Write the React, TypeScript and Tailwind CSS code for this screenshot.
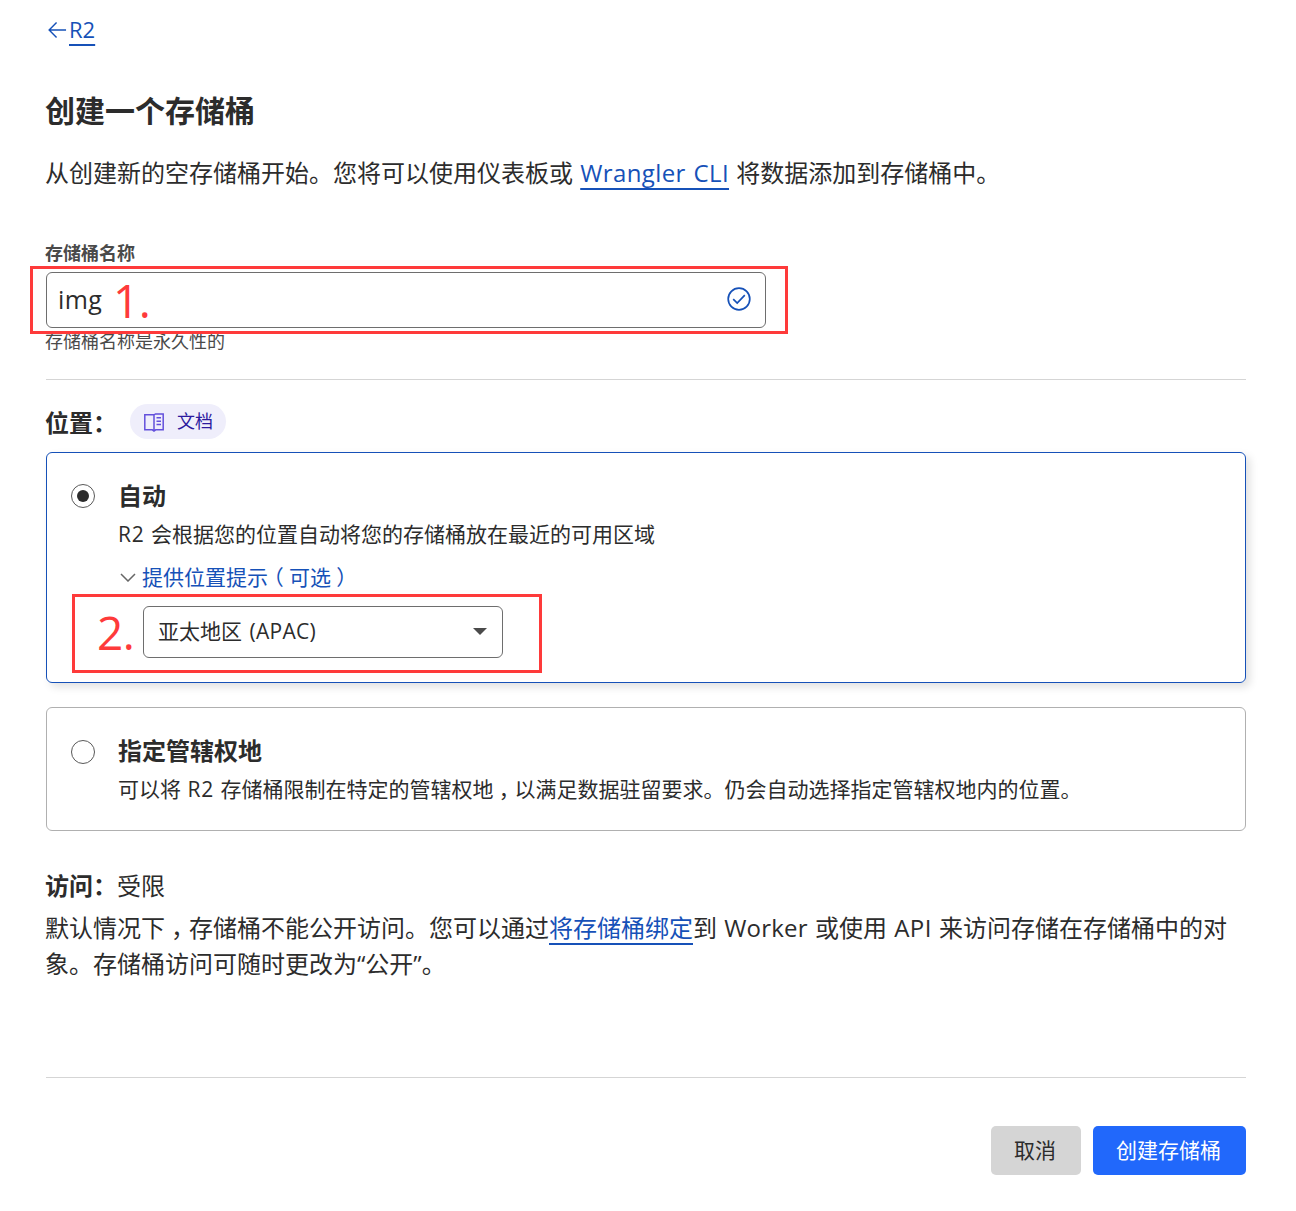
import React from "react";

function Mark({ children, className }: { children: React.ReactNode; className: string }) {
  return (
    <span className={`pointer-events-none absolute text-[46px] leading-[46px] tracking-[-0.5px] text-[#fe3a3a] ${className}`}>
      {children}
    </span>
  );
}

function Link({ children, className = "" }: { children: React.ReactNode; className?: string }) {
  return (
    <a
      href="#"
      className={`text-[#1651b8] underline decoration-2 underline-offset-[6px] ${className}`}
    >
      {children}
    </a>
  );
}

/* Full-width punctuation, centred in its one-em cell. */
function Punct({ children }: { children: React.ReactNode }) {
  return <span className="px-[0.25em] [font-feature-settings:'halt']">{children}</span>;
}

function Radio({ checked = false, className }: { checked?: boolean; className: string }) {
  return (
    <span
      role="radio"
      aria-checked={checked}
      className={`ml-6 flex size-6 shrink-0 items-center justify-center rounded-full border border-[#595959] bg-white ${className}`}
    >
      {checked && <span className="size-3 rounded-full bg-[#2c2c2c]" />}
    </span>
  );
}

export default function App() {
  return (
    <main className="h-[1211px] w-[1296px] overflow-hidden bg-white pr-[50px] pl-[46px] font-['Open_Sans','Noto_Sans_CJK_SC',sans-serif] text-[24px] text-[#2c2c2c]">
      <nav className="flex h-[58px] items-center text-[22px] leading-[30px]">
        <svg className="mt-px ml-[2px] mr-[2px] h-[18px] w-[19px] text-[#1651b8]" viewBox="0 0 20 18" fill="none" stroke="currentColor" strokeWidth="1.5">
          <path d="M19 9H1.5M9 1L1.2 9L9 17" />
        </svg>
        <Link>R2</Link>
      </nav>

      <h1 className="mt-[31px] -ml-px text-[30px] leading-[44px] font-bold">创建一个存储桶</h1>
      <p className="mt-[22px] -ml-px leading-[36px] whitespace-nowrap [word-spacing:1px]">
        从创建新的空存储桶开始。您将可以使用仪表板或 <Link className="tracking-[0.4px]">Wrangler CLI</Link> 将数据添加到存储桶中。
      </p>

      <div className="relative mt-[51px]">
        <label className="-ml-px block h-[30px] text-[18px] leading-[22px] font-bold text-[#4a4a4a]">存储桶名称</label>
        <div className="flex h-14 w-[720px] items-center justify-between rounded-md border border-[#6e6e6e] pr-[14px] pl-[11px]">
          <span className="text-[25px] tracking-[0.4px]">img</span>
          <svg className="mb-[2px] size-6 text-[#1651b8]" viewBox="0 0 24 24" fill="none" stroke="currentColor" strokeWidth="1.7">
            <circle cx="12" cy="12" r="10.8" />
            <path d="M6.2 12.2L10.2 16L17.8 8.2" />
          </svg>
        </div>
        <div className="h-[52px] border-b border-[#d5d5d5]">
          <p className="-ml-px text-[18px] leading-[27px] text-[#4a4a4a]">存储桶名称是永久性的</p>
        </div>
        <div className="pointer-events-none absolute top-6 -left-4 h-[68px] w-[758px] border-3 border-[#fe3a3a]" />
        <Mark className="top-[35px] left-[67px]">1.</Mark>
      </div>

      <div className="flex h-[72px] items-center pt-[13px]">
        <h2 className="-ml-px text-[24px] leading-[36px] font-bold">位置：</h2>
        <a href="#" className="mb-[2px] ml-[13px] flex h-[35px] w-24 items-center rounded-full bg-[#efeefb] pl-[14px] text-[18px] text-[#2c1a9e]">
          <svg className="mt-px mr-[13px] h-[19px] w-5 text-[#6350dc]" viewBox="0 0 20 19" fill="none" stroke="currentColor" strokeWidth="1.5">
            <path d="M10 1.8H0.8V16.8H8.3L10 18L11.7 16.8H19.2V0.9H11.5L10 1.8V18M12.5 4.8H17M12.5 8.2H17M12.5 11.5H17" />
          </svg>
          <span className="pb-px">文档</span>
        </a>
      </div>

      <section className="relative flex h-[231px] rounded-md border border-[#1651b8] shadow-[4px_4px_8px_rgba(0,0,0,0.12)]">
        <Radio checked className="mt-[31px]" />
        <div className="ml-[23px] pt-[25px]">
          <h3 className="leading-[36px] font-bold">自动</h3>
          <p className="mt-1 text-[21px] leading-[32px] [word-spacing:1px]">
            <span className="tracking-[0.8px]">R2</span> 会根据您的位置自动将您的存储桶放在最近的可用区域
          </p>
          <div className="mt-[11px] flex items-center text-[21px] leading-[32px] text-[#1651b8]">
            <svg className="mr-[6px] ml-[2px] h-[9px] w-4 text-[#666]" viewBox="0 0 16 9" fill="none" stroke="currentColor" strokeWidth="1.5">
              <path d="M1 1L8 8L15 1" />
            </svg>
            提供位置提示<Punct>（</Punct>可选<Punct>）</Punct>
          </div>
          <div className="mt-[13px] ml-[25px] flex h-[52px] w-[360px] items-center justify-between rounded-md border border-[#6e6e6e] pr-[15px] pl-[14px] text-[21px]">
            <span className="[word-spacing:2px]">亚太地区 <span className="tracking-[0.3px]">(APAC)</span></span>
            <svg className="mb-[2px] h-[7px] w-[14px] text-[#4a4a4a]" viewBox="0 0 14 7" fill="currentColor">
              <path d="M0 0H14L7 7Z" />
            </svg>
          </div>
        </div>
        <div className="pointer-events-none absolute top-[141px] left-[25px] h-[79px] w-[470px] border-3 border-[#fe3a3a]" />
        <Mark className="top-[156px] left-[50px]">2.</Mark>
      </section>

      <section className="mt-6 flex h-[124px] rounded-md border border-[#b0b0b0]">
        <Radio className="mt-8" />
        <div className="ml-[23px] pt-[25px]">
          <h3 className="leading-[36px] font-bold">指定管辖权地</h3>
          <p className="mt-1 text-[21px] leading-[32px] whitespace-nowrap [word-spacing:1px]">
            可以将 <span className="tracking-[0.8px]">R2</span> 存储桶限制在特定的管辖权地<Punct>，</Punct>以满足数据驻留要求。仍会自动选择指定管辖权地内的位置。
          </p>
        </div>
      </section>

      <section className="mt-[37px] h-[210px] border-b border-[#d5d5d5]">
        <p className="-ml-px leading-[36px]">
          <b className="font-bold">访问：</b>受限
        </p>
        <p className="mt-[6px] -ml-px leading-[36px] whitespace-nowrap [word-spacing:1px]">
          默认情况下<Punct>，</Punct>存储桶不能公开访问。您可以通过<Link className="underline-offset-[5px]">将存储桶绑定</Link>到 <span className="tracking-[0.2px]">Worker</span> 或使用 <span className="tracking-[0.4px]">API</span> 来访问存储在存储桶中的对
          <br />
          象。存储桶访问可随时更改为“公开”。
        </p>
      </section>

      <footer className="mt-12 flex justify-end gap-3 text-[21px]">
        <button className="h-[49px] w-[90px] rounded-[5px] bg-[#d5d5d5] pr-[2px]">取消</button>
        <button className="h-[49px] w-[153px] rounded-[5px] bg-[#2168fb] pr-[2px] text-white">创建存储桶</button>
      </footer>
    </main>
  );
}
